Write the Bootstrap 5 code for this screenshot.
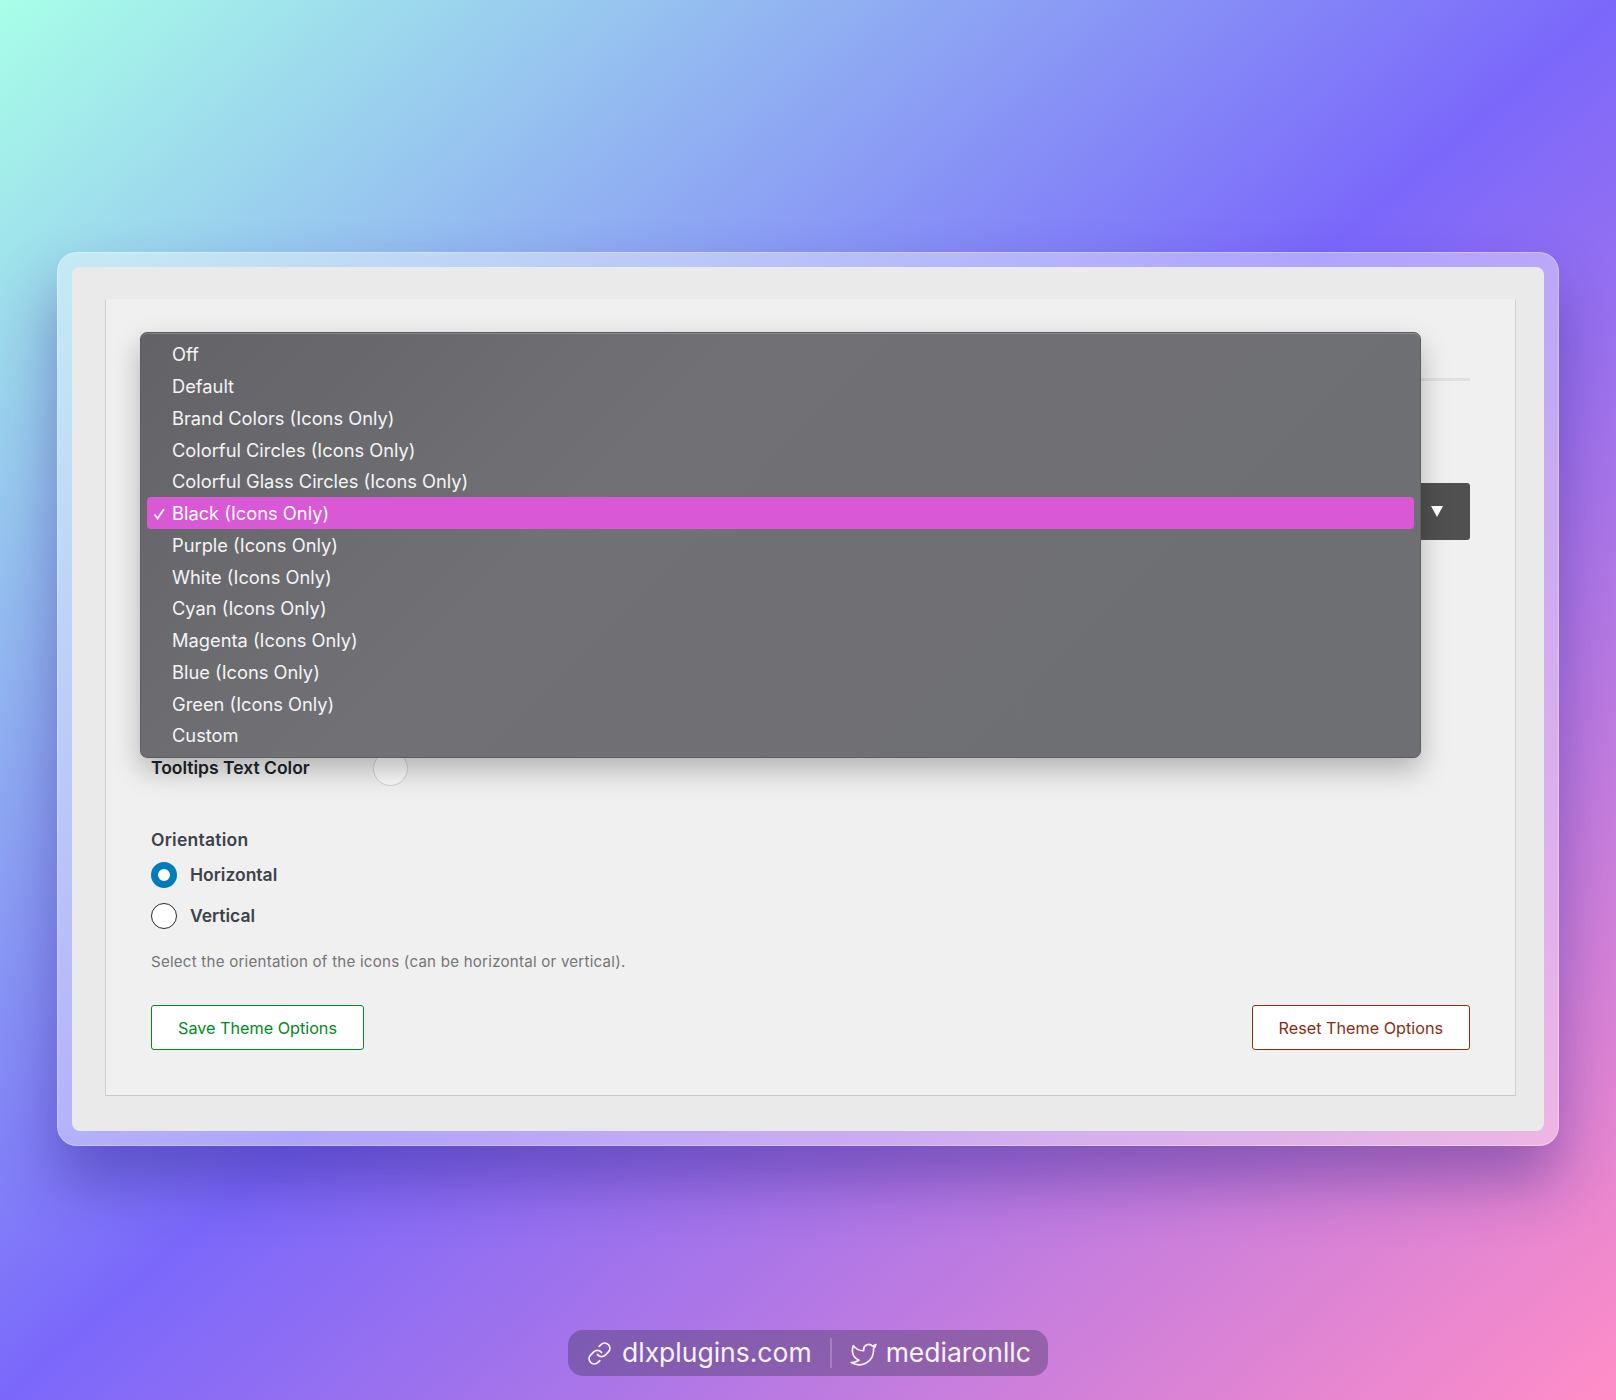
<!DOCTYPE html>
<html lang="en"><head><meta charset="utf-8"><title>Theme options</title>
<link href="https://cdn.jsdelivr.net/npm/bootstrap@5.3.0/dist/css/bootstrap.min.css" rel="stylesheet">
<style>
html,body{margin:0;height:1400px;overflow:hidden}
body{font-family:Inter,"Liberation Sans",sans-serif;background:linear-gradient(to bottom right,#a8ffe8 0%,#7b68fb 50%,#ff8dc7 100%);padding-top:252px}
.glass-frame{width:1502px;height:894px;margin-left:57px;padding:15px;border-radius:20px;background:rgba(255,255,255,.4);border:1px solid rgba(255,255,255,.3);box-shadow:0 36px 60px rgba(45,30,130,.42)}
.frame-inner{background:#eaeaea;height:864px;border-radius:8px;padding:32px 28px 0 33px;margin:-1px}
.opt-panel{position:relative;background:#f0f0f1;height:797px;border:1px solid #c8c8c8;border-top-color:#efefef;border-right-color:#cfcfcf;border-left-color:#cfcfcf;padding:78px 45px 0 45px}
.rule-line{height:3px;background:#e0e0e0;margin-bottom:102px}
.select-row{height:57px;background:#fff;border-radius:3px;justify-content:flex-end}
.select-arrow{width:50px;background:#505050;border-radius:0 3px 3px 0;color:#fff;padding-left:11px}
.tip-row{margin-top:211px;height:34px;color:#1d2327;font-weight:600;font-size:17.5px}
.tip-label{width:222px;padding-top:1px}
.color-dot{width:35px;height:35px;border-radius:50%;background:#fafafa;border:1px solid #d2d2d2}
.orient-title{margin-top:43px;color:#3c434a;font-weight:600;font-size:17.5px;letter-spacing:.25px;line-height:24px}
.radio-row{height:26px;color:#3c434a;font-weight:600;font-size:17.5px;gap:13px}
.radio-label{padding-top:1px}
.radio-a{margin-top:10px}.radio-b{margin-top:15px}
.radio-dot{width:26px;height:26px;border-radius:50%;flex:none;background:#fff;border:1.5px solid #2b2b2b}
.radio-on{border:7.5px solid #007cba}
.help-line{margin-top:22px;color:#757575;font-size:15.1px;letter-spacing:.23px;line-height:22px}
.act-row{margin-top:32px}
.btn.act-btn{height:45px;background:#fff;border-radius:3px;font-size:16.2px;padding:1px 26px 0;display:flex;align-items:center;border-width:1.5px}
.act-save{color:#008a20;border-color:#008a20}
.act-reset{color:#8a2d0e;border-color:#8a2d0e}
.drop-menu{position:absolute;left:34px;top:32px;width:1281px;height:426px;background:linear-gradient(135deg,#636367,#717175 35%,#6e6f73 100%);border-radius:7px;border:1px solid #5c5c61;box-shadow:0 12px 28px rgba(0,0,0,.26),inset 0 1px 0 rgba(255,255,255,.2);padding:5.6px 6px;color:#f4f4f5;font-size:18.3px}
.drop-item{height:31.75px;padding-left:25px;border-radius:4px;position:relative;display:flex;align-items:center;top:.5px}
.drop-active{background:#d858d6;color:#fff;top:0}
.drop-check{position:absolute;left:6px;top:11px}
.arrow-tri{width:0;height:0;border-left:6px solid transparent;border-right:6px solid transparent;border-top:11px solid #fff}
.foot-wrap{margin-top:184px}
.foot-pill{width:480px;height:46px;border-radius:15px;background:rgba(62,50,90,.38);color:#f7f3fb;font-size:26.5px;padding-left:19px}
.foot-link-icon{margin-right:10px}
.foot-bird{margin-right:9px}
.foot-sep{width:2px;height:30px;background:rgba(255,255,255,.22);margin:0 18px 0 18px}
</style></head>
<body>
<div class="glass-frame">
  <div class="frame-inner">
    <div class="opt-panel">
      <div class="rule-line"></div>
      <div class="select-row d-flex"><div class="select-arrow d-flex align-items-center"><span class="arrow-tri"></span></div></div>
      <div class="tip-row d-flex align-items-center"><span class="tip-label">Tooltips Text Color</span><span class="color-dot"></span></div>
      <div class="orient-title">Orientation</div>
      <div class="radio-row radio-a d-flex align-items-center"><span class="radio-dot radio-on"></span><span class="radio-label">Horizontal</span></div>
      <div class="radio-row radio-b d-flex align-items-center"><span class="radio-dot"></span><span class="radio-label">Vertical</span></div>
      <div class="help-line">Select the orientation of the icons (can be horizontal or vertical).</div>
      <div class="act-row d-flex justify-content-between">
        <button type="button" class="btn act-btn act-save">Save Theme Options</button>
        <button type="button" class="btn act-btn act-reset">Reset Theme Options</button>
      </div>
      <div class="drop-menu">
        <div class="drop-item">Off</div>
        <div class="drop-item">Default</div>
        <div class="drop-item">Brand Colors (Icons Only)</div>
        <div class="drop-item">Colorful Circles (Icons Only)</div>
        <div class="drop-item">Colorful Glass Circles (Icons Only)</div>
        <div class="drop-item drop-active"><svg class="drop-check" width="13" height="12" viewBox="0 0 13 12" fill="none" stroke="#fff" stroke-width="1.9"><path d="M1.5 6.5 4.6 10.5 11 1"/></svg>Black (Icons Only)</div>
        <div class="drop-item">Purple (Icons Only)</div>
        <div class="drop-item">White (Icons Only)</div>
        <div class="drop-item">Cyan (Icons Only)</div>
        <div class="drop-item">Magenta (Icons Only)</div>
        <div class="drop-item">Blue (Icons Only)</div>
        <div class="drop-item">Green (Icons Only)</div>
        <div class="drop-item">Custom</div>
      </div>
    </div>
  </div>
</div>
<div class="foot-wrap d-flex justify-content-center">
  <div class="foot-pill d-flex align-items-center">
    <svg class="foot-link-icon" width="25" height="25" viewBox="0 0 24 24" fill="none" stroke="#f7f3fb" stroke-width="1.7" stroke-linecap="round" stroke-linejoin="round"><path d="M10 13a5 5 0 0 0 7.54.54l3-3a5 5 0 0 0-7.07-7.07l-1.72 1.71"/><path d="M14 11a5 5 0 0 0-7.54-.54l-3 3a5 5 0 0 0 7.07 7.07l1.71-1.71"/></svg>
    <span>dlxplugins.com</span><span class="foot-sep"></span>
    <svg class="foot-bird" width="27" height="25" viewBox="0 0 24 22" fill="none" stroke="#f7f3fb" stroke-width="1.5" stroke-linejoin="round"><path d="M23 3a10.9 10.9 0 0 1-3 1.53 4.48 4.48 0 0 0-7.86 3v1A10.66 10.66 0 0 1 3 4s-4 9 5 13a11.64 11.64 0 0 1-7 2c9 5 20 0 20-11.5a4.5 4.5 0 0 0-.08-.83A7.72 7.72 0 0 0 23 3z"/></svg>
    <span>mediaronllc</span>
  </div>
</div>
<script src="https://cdn.jsdelivr.net/npm/bootstrap@5.3.0/dist/js/bootstrap.bundle.min.js"></script>
</body></html>
